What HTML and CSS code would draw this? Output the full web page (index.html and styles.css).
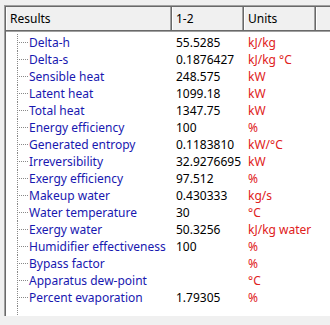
FILE: index.html
```html
<!DOCTYPE html>
<html>
<head>
<meta charset="utf-8">
<link rel="stylesheet" href="styles.css">
</head>
<body>
<div class="panel">
  <div class="header">
    <div class="hcell c1">Results</div>
    <div class="hcell c2">1-2</div>
    <div class="hcell c3">Units</div>
    <div class="hcell c4"></div>
  </div>
  <div class="body">
    <div class="row"><div class="name"><span class="branch"></span>Delta-h</div><div class="val">55.5285</div><div class="unit">kJ/kg</div></div>
    <div class="row"><div class="name"><span class="branch"></span>Delta-s</div><div class="val">0.1876427</div><div class="unit">kJ/kg °C</div></div>
    <div class="row"><div class="name"><span class="branch"></span>Sensible heat</div><div class="val">248.575</div><div class="unit">kW</div></div>
    <div class="row"><div class="name"><span class="branch"></span>Latent heat</div><div class="val">1099.18</div><div class="unit">kW</div></div>
    <div class="row"><div class="name"><span class="branch"></span>Total heat</div><div class="val">1347.75</div><div class="unit">kW</div></div>
    <div class="row"><div class="name"><span class="branch"></span>Energy efficiency</div><div class="val">100</div><div class="unit">%</div></div>
    <div class="row"><div class="name"><span class="branch"></span>Generated entropy</div><div class="val">0.1183810</div><div class="unit">kW/°C</div></div>
    <div class="row"><div class="name"><span class="branch"></span>Irreversibility</div><div class="val">32.9276695</div><div class="unit">kW</div></div>
    <div class="row"><div class="name"><span class="branch"></span>Exergy efficiency</div><div class="val">97.512</div><div class="unit">%</div></div>
    <div class="row"><div class="name"><span class="branch"></span>Makeup water</div><div class="val">0.430333</div><div class="unit">kg/s</div></div>
    <div class="row"><div class="name"><span class="branch"></span>Water temperature</div><div class="val">30</div><div class="unit">°C</div></div>
    <div class="row"><div class="name"><span class="branch"></span>Exergy water</div><div class="val">50.3256</div><div class="unit">kJ/kg water</div></div>
    <div class="row"><div class="name"><span class="branch"></span>Humidifier effectiveness</div><div class="val">100</div><div class="unit">%</div></div>
    <div class="row"><div class="name"><span class="branch"></span>Bypass factor</div><div class="val"></div><div class="unit">%</div></div>
    <div class="row"><div class="name"><span class="branch"></span>Apparatus dew-point</div><div class="val"></div><div class="unit">°C</div></div>
    <div class="row"><div class="name"><span class="branch"></span>Percent evaporation</div><div class="val">1.79305</div><div class="unit">%</div></div>
    <div class="tail"></div>
  </div>
</div>
</body>
</html>
```
FILE: styles.css
```css
html, body {
  margin: 0;
  padding: 0;
  background: #f0f0f0;
  font-family: "Noto Sans", "Open Sans", sans-serif;
  font-size: 12px;
  overflow: hidden;
}
.panel {
  margin: 5px 0 0 4px;
  width: 340px;
  height: 309px;
  border-top: 1px solid #a0a0a0;
  border-left: 1px solid #a0a0a0;
  box-shadow: inset 1px 1px 0 #696969;
  padding: 1px 0 0 1px;
  background: #fff;
  display: flex;
  flex-direction: column;
}
.header {
  display: flex;
  height: 23px;
  background: #f0f0f0;
  border-bottom: 1px solid #696969;
  box-shadow: 0 1px 0 #a0a0a0;
  flex: none;
}
.hcell {
  box-sizing: border-box;
  height: 100%;
  display: flex;
  align-items: center;
  padding-left: 4px;
  color: #000;
  border-right: 1px solid #696969;
  box-shadow: inset -1px 0 0 #a0a0a0, inset 1px 0 0 #fff;
}
.c1 { width: 166px; }
.c2 { width: 72px; }
.c3 { width: 72px; }
.c4 { flex: 1; border-right: none; }
.body {
  padding-top: 3px;
  display: flex;
  flex-direction: column;
  flex: 1;
}
.row {
  display: flex;
  height: 17px;
  line-height: 17px;
  white-space: nowrap;
}
.name {
  width: 166px;
  color: #1818b0;
  display: flex;
  padding-left: 11px;
  box-sizing: border-box;
  overflow: hidden;
}
.branch {
  width: 12px;
  flex: none;
  background-image:
    repeating-linear-gradient(to bottom, #888 0 1px, transparent 1px 2px),
    repeating-linear-gradient(to right, #888 0 1px, transparent 1px 2px);
  background-size: 1px 100%, 10px 1px;
  background-position: 0 0, 2px 8px;
  background-repeat: no-repeat;
}
.val {
  width: 72px;
  padding-left: 4px;
  box-sizing: border-box;
  color: #000;
}
.unit {
  padding-left: 4px;
  color: #e02020;
}
.tail {
  margin-left: 11px;
  width: 1px;
  flex: 1;
  background-image: repeating-linear-gradient(to bottom, #888 0 1px, transparent 1px 2px);
}
```
